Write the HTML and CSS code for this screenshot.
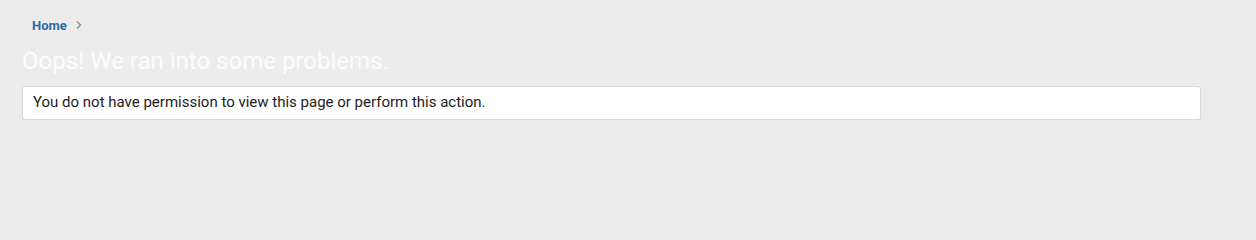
FILE: index.html
```html
<!DOCTYPE html>
<html lang="en">
<head>
<meta charset="utf-8">
<title>Error</title>
<link rel="stylesheet" href="styles.css">
</head>
<body>
<div class="page">
  <nav class="breadcrumbs">
    <a class="crumb" href="#">Home</a>
    <svg class="chev" width="8" height="10" viewBox="0 0 8 10"><path d="M2 1.5 L5.5 5 L2 8.5" fill="none" stroke="#8c8c8c" stroke-width="1.4"/></svg>
  </nav>
  <h1 class="title">Oops! We ran into some problems.</h1>
  <div class="message">You do not have permission to view this page or perform this action.</div>
</div>
</body>
</html>
```
FILE: styles.css
```css
html, body {
  margin: 0;
  padding: 0;
  background: #ececec;
  font-family: Roboto, "Liberation Sans", sans-serif;
}
.page {
  padding: 16px 55px 0 22px;
}
.breadcrumbs {
  display: flex;
  align-items: center;
  gap: 8px;
  padding-left: 10px;
  height: 18px;
}
.crumb {
  color: #2d6aa3;
  font-weight: 700;
  font-size: 13px;
  text-decoration: none;
}
.chev {
  display: block;
}
.title {
  margin: 12px 0 0 0;
  font-size: 24px;
  font-weight: 400;
  color: #fbfbfb;
  line-height: 30px;
}
.message {
  margin-top: 10px;
  background: #fff;
  border: 1px solid #d8d8d8;
  border-radius: 3px;
  padding: 6px 10px 7px;
  font-size: 15px;
  line-height: 19px;
  color: #1d1d1d;
  box-shadow: 0 1px 1px rgba(0,0,0,0.06);
}
```
